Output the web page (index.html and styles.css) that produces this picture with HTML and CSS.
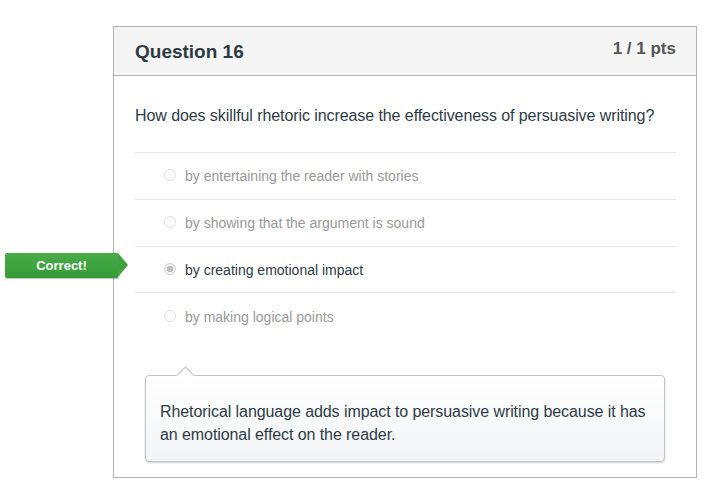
FILE: index.html
```html
<!DOCTYPE html>
<html>
<head>
<meta charset="utf-8">
<link rel="stylesheet" href="styles.css">
</head>
<body>
<div class="card">
  <div class="card-header">
    <h2 class="title">Question 16</h2>
    <div class="pts">1 / 1 pts</div>
  </div>
  <div class="card-body">
    <p class="question">How does skillful rhetoric increase the effectiveness of persuasive writing?</p>
    <div class="answers">
      <div class="answer"><span class="radio"></span><span class="label">by entertaining the reader with stories</span></div>
      <div class="answer"><span class="radio"></span><span class="label">by showing that the argument is sound</span></div>
      <div class="answer selected">
        <span class="tag">Correct!</span>
        <span class="radio checked"></span><span class="label">by creating emotional impact</span>
      </div>
      <div class="answer last"><span class="radio"></span><span class="label">by making logical points</span></div>
    </div>
    <div class="comment">
      <p>Rhetorical language adds impact to persuasive writing because it has an emotional effect on the reader.</p>
    </div>
  </div>
</div>
</body>
</html>
```
FILE: styles.css
```css
html, body {
  margin: 0;
  padding: 0;
  background: #fff;
}
body {
  font-family: "Liberation Sans", Arial, sans-serif;
  color: #2d3b45;
}
.card {
  margin: 26px 0 0 113px;
  width: 582px;
  border: 1px solid #b3b3b3;
  background: #fff;
}
.card-header {
  background: #f5f5f5;
  border-bottom: 1px solid #b3b3b3;
  height: 48px;
  display: flex;
  justify-content: space-between;
  align-items: flex-start;
  padding: 0 20px 0 21px;
}
.title {
  margin: 14px 0 0;
  font-size: 19px;
  font-weight: bold;
  line-height: 22px;
  color: #2d3b45;
}
.pts {
  margin-top: 12px;
  font-size: 17px;
  font-weight: bold;
  line-height: 20px;
  color: #555;
}
.card-body {
  padding: 30px 20px 15px 21px;
}
.question {
  margin: 0;
  font-size: 16px;
  letter-spacing: -0.08px;
  line-height: 20px;
  color: #2d3b45;
}
.answers {
  margin-top: 26px;
}
.answer {
  position: relative;
  display: flex;
  align-items: center;
  height: 46px;
  border-top: 1px solid #e6e6e6;
  padding-left: 29px;
  font-size: 14px;
  color: #999;
}
.answer:nth-child(3), .answer:nth-child(4) {
  height: 45px;
}
.answer.last {
  height: 47px;
}
.answer.selected {
  color: #2d3b45;
}
.radio {
  width: 12px;
  height: 12px;
  border-radius: 50%;
  border: 1px solid #e2e2e2;
  background: #fbfbfb;
  box-sizing: border-box;
  margin-right: 9px;
  position: relative;
  top: -1px;
}
.radio.checked {
  border-color: #cfcfcf;
  background: radial-gradient(circle, #bdbdbd 0 3px, #f2f2f2 3.5px);
}
.label {
  line-height: 18px;
}
.tag {
  position: absolute;
  left: -130px;
  top: 6px;
  width: 113px;
  height: 25px;
  background: linear-gradient(#47ad47, #379a37);
  color: #fff;
  font-weight: bold;
  font-size: 13px;
  line-height: 25px;
  text-align: center;
  border-radius: 2px 0 0 2px;
  box-shadow: 0 1px 1px rgba(0,0,0,0.25);
}
.tag::after {
  content: "";
  position: absolute;
  right: -10px;
  top: 0;
  border-top: 12.5px solid transparent;
  border-bottom: 12.5px solid transparent;
  border-left: 10px solid #3ea33e;
}
.comment {
  position: relative;
  margin: 35px 11px 0 10px;
  border: 1px solid #c4c4c4;
  border-radius: 4px;
  background: linear-gradient(#ffffff, #f3f4f6);
  box-shadow: 0 1px 2px rgba(0,0,0,0.2);
  padding: 24px 14px 15px;
}
.comment::before {
  content: "";
  position: absolute;
  left: 33px;
  top: -7px;
  width: 12px;
  height: 12px;
  background: #fff;
  border-left: 1px solid #c4c4c4;
  border-top: 1px solid #c4c4c4;
  transform: rotate(45deg);
}
.comment p {
  margin: 0;
  font-size: 16px;
  letter-spacing: -0.08px;
  line-height: 23px;
  color: #2d3b45;
}
```
